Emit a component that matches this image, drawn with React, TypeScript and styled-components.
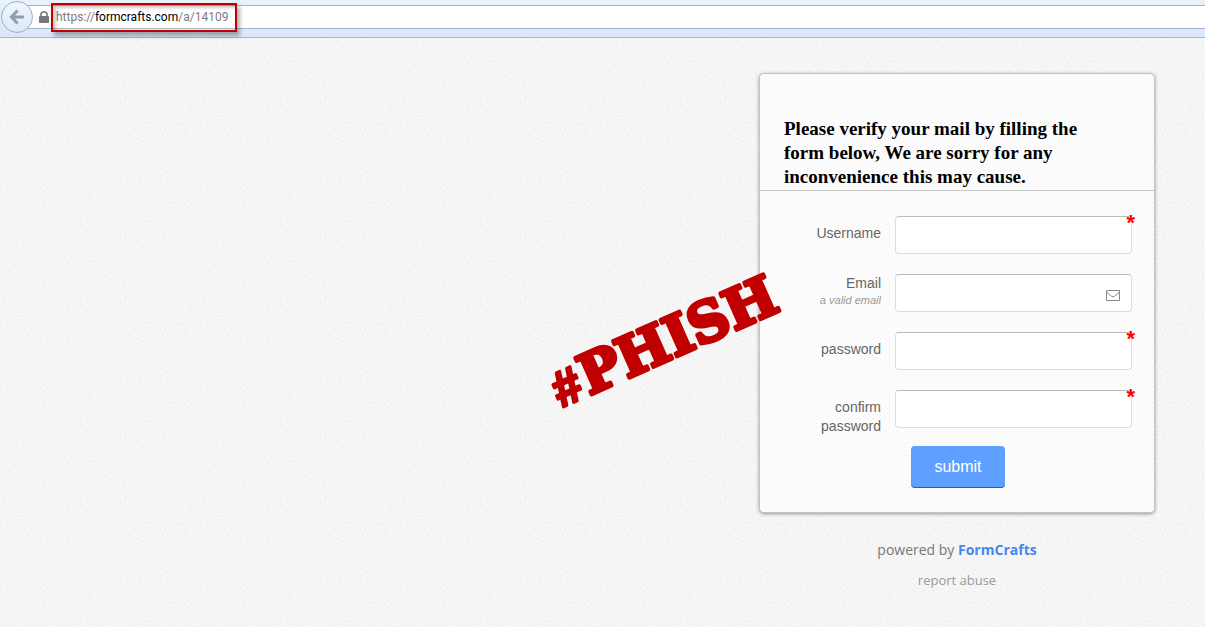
import React from "react";
import styled, { createGlobalStyle } from "styled-components";

const sans = `"Liberation Sans", Arial, sans-serif`;
const humanist = `"Open Sans", "Noto Sans", sans-serif`;

const grain = encodeURIComponent(
  `<svg xmlns="http://www.w3.org/2000/svg" width="200" height="200"><filter id="n" x="0" y="0" width="100%" height="100%"><feTurbulence type="fractalNoise" baseFrequency="0.45" numOctaves="2" stitchTiles="stitch"/><feColorMatrix values="0 0 0 0 0.5  0 0 0 0 0.5  0 0 0 0 0.5  0.28 0 0 0 -0.08"/></filter><rect width="200" height="200" filter="url(#n)"/></svg>`
);

const GlobalStyle = createGlobalStyle`
  * { box-sizing: border-box; }
  body {
    margin: 0;
    background: #f9f9f9 url("data:image/svg+xml,${grain}");
    font-family: ${sans};
  }
`;

const Page = styled.div`
  min-height: 100vh;
  overflow-x: hidden;
`;

const Toolbar = styled.header`
  display: flex;
  align-items: center;
  height: 38px;
  padding: 0 0 3px 1px;
  background: linear-gradient(#e9f2fb, #d9e7f8);
  border-bottom: 1px solid #a3b8cf;
`;

const BackButton = styled.button`
  display: grid;
  place-items: center;
  flex: none;
  width: 32px;
  height: 32px;
  padding: 0;
  border: 1px solid #9fb0c4;
  border-radius: 50%;
  background: linear-gradient(#f1f7fd, #dce9f7);
  z-index: 1;
`;

const AddressBar = styled.div`
  display: flex;
  align-items: center;
  flex: 1;
  gap: 7px;
  height: 24px;
  margin-left: -16px;
  padding-left: 21px;
  background: #fff;
  border: 1px solid #a3b5ca;
  border-right: 0;
`;

const Address = styled.div`
  position: relative;
  color: #7b7b7b;
  font: 12px/20px Roboto, ${humanist};
  b { color: #000; font-weight: 400; }
`;

const Highlight = styled.span`
  position: absolute;
  inset: -4px -9px -5px -5px;
  border: 2px solid #c00000;
  box-shadow: 3px 4px 4px rgba(0, 0, 0, 0.3), inset 3px 3px 3px rgba(0, 0, 0, 0.2);
`;

const Main = styled.main`
  display: flex;
  justify-content: flex-end;
  padding: 36px 51px 30px 20px;
`;

const Column = styled.div`
  position: relative;
  width: 394px;
`;

const Card = styled.form`
  background:
    radial-gradient(circle at 1px 1px, #f8f8f8 1px, transparent 1px) 0 0 / 4px 4px,
    radial-gradient(circle at 1px 1px, #fafafa 1px, transparent 1px) 2px 2px / 4px 4px,
    #fefefe;
  border-radius: 4px;
  box-shadow: 0 0 0 1px #c4c4c4, 0 1px 4px rgba(0, 0, 0, 0.6);
`;

const Title = styled.h1`
  margin: 0;
  padding: 43px 64px 1px 24px;
  border-bottom: 1px solid #c8c8c8;
  color: #000;
  font: bold 19px/24px "Liberation Serif", "Times New Roman", serif;
`;

const Fields = styled.div`
  display: grid;
  gap: 20px;
  padding: 25px 22px 0 24px;
`;

const Row = styled.div`
  display: grid;
  grid-template-columns: 97px 1fr;
  gap: 14px;
  align-items: start;
`;

const Label = styled.label<{ $hinted?: boolean }>`
  padding-top: ${(p) => (p.$hinted ? 0 : 8)}px;
  color: #666;
  font-size: 14px;
  line-height: 19px;
  text-align: right;
`;

const Hint = styled.small`
  display: block;
  color: #999;
  font-size: 11px;
  font-style: italic;
  line-height: 15px;
`;

const Control = styled.div`
  position: relative;
`;

const TextBox = styled.input`
  display: block;
  width: 100%;
  height: 38px;
  padding: 0 12px;
  border: 1px solid #ddd;
  border-top-color: #bbb;
  border-radius: 4px;
  background: #fff;
  font: 14px ${sans};
`;

const Required = styled.span`
  position: absolute;
  top: -4px;
  right: -3px;
  color: #f00;
  font: bold 22px/22px ${sans};
`;

const MailIcon = styled.svg`
  position: absolute;
  top: 16px;
  right: 12px;
`;

const Submit = styled.button`
  display: block;
  width: 94px;
  height: 42px;
  margin: 10px auto 0 151px;
  border: 0;
  border-bottom: 1px solid #41597d;
  border-radius: 4px;
  background: #5f9fff;
  color: #fff;
  font: 16px ${sans};
`;

const CardFoot = styled.div`
  height: 24px;
`;

const Footer = styled.footer`
  margin-top: 28px;
  color: #777;
  font: 14px/20px ${humanist};
  text-align: center;
  p { margin: 0 0 10px; }
`;

const BrandLink = styled.a`
  color: #4488ee;
  font-weight: 700;
  text-decoration: none;
`;

const QuietLink = styled.a`
  color: #999;
  font-size: 13px;
  text-decoration: none;
`;

const Stamp = styled.svg`
  position: absolute;
  left: -220px;
  top: 180px;
  overflow: visible;
  pointer-events: none;
  fill: #c00000;
  stroke: #c00000;
  stroke-width: 4px;
  stroke-linejoin: round;
  font: bold 55px "DejaVu Serif", serif;
`;

const StampHash = styled.tspan`
  font: bold 50px ${sans};
  stroke-width: 3px;
`;

type FieldProps = {
  id: string;
  label: string;
  type?: string;
  hint?: string;
  required?: boolean;
};

function Field({ id, label, type = "text", hint, required }: FieldProps) {
  return (
    <Row>
      <Label htmlFor={id} $hinted={!!hint}>
        {label}
        {hint && <Hint>{hint}</Hint>}
      </Label>
      <Control>
        <TextBox id={id} type={type} required={required} />
        {required && <Required aria-hidden="true">*</Required>}
        {type === "email" && (
          <MailIcon width="14" height="11" viewBox="0 0 14 11" fill="none" stroke="#888">
            <path d="M.5.5h13v10H.5zM.5 2l5 4.3q1.500 1.200 3 0l5-4.300" />
          </MailIcon>
        )}
      </Control>
    </Row>
  );
}

export default function App() {
  return (
    <Page>
      <GlobalStyle />
      <Toolbar>
        <BackButton aria-label="Back">
          <svg width="16" height="16" viewBox="0 0 16 16" fill="none" stroke="#8f9dac" strokeWidth="3">
            <path d="M8.500 1.500L2.500 8l6 6.500M3 8h12" />
          </svg>
        </BackButton>
        <AddressBar>
          <svg width="10" height="12" viewBox="0 0 10 12">
            <path d="M2 6V3.500a3 2.700 0 0 1 6 0V6" fill="none" stroke="#777" strokeWidth="1.600" />
            <rect y="5" width="10" height="7" rx="1" fill="#777" />
          </svg>
          <Address>
            https://<b>formcrafts.com</b>/a/14109
            <Highlight />
          </Address>
        </AddressBar>
      </Toolbar>
      <Main>
        <Column>
          <Card onSubmit={(e) => e.preventDefault()}>
            <Title>
              Please verify your mail by filling the form below, We are sorry for any inconvenience this may cause.
            </Title>
            <Fields>
              <Field id="username" label="Username" required />
              <Field id="email" label="Email" type="email" hint="a valid email" />
              <Field id="password" label="password" type="password" required />
              <Field id="confirm" label="confirm password" type="password" required />
            </Fields>
            <Submit type="submit">submit</Submit>
            <CardFoot />
          </Card>
          <Footer>
            <p>
              powered by <BrandLink href="#formcrafts">FormCrafts</BrandLink>
            </p>
            <p>
              <QuietLink href="#report">report abuse</QuietLink>
            </p>
          </Footer>
          <Stamp width="260" height="170" viewBox="0 0 260 170">
            <text transform="translate(21 154) rotate(-24)">
              <StampHash>#</StampHash>
              <tspan dx="3">PHISH</tspan>
            </text>
          </Stamp>
        </Column>
      </Main>
    </Page>
  );
}
